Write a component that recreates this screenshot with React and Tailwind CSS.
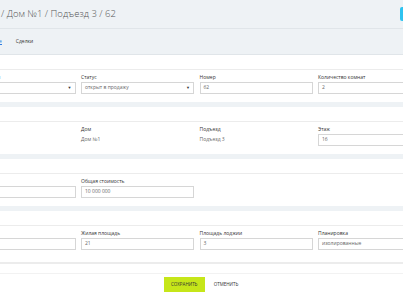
const FONT = "font-['Open_Sans','Liberation_Sans',sans-serif]";

function Label({ children }) {
  return (
    <div className="h-[7px] mb-[1px] text-[5px] leading-[7px] text-[#333] whitespace-nowrap">
      {children}
    </div>
  );
}

function Input({ value }) {
  return (
    <div className="h-[12px] border border-[#d6d6d6] bg-white flex items-center pl-[3px] text-[5px] text-[#666]">
      {value}
    </div>
  );
}

function Select({ value }) {
  return (
    <div className="h-[12px] border border-[#d6d6d6] bg-white flex items-center justify-between pl-[3px] pr-[3px] text-[5px] text-[#666]">
      <span>{value}</span>
      <span className="text-[4px] text-[#333]">▼</span>
    </div>
  );
}

function Text({ value }) {
  return (
    <div className="h-[12px] flex items-center text-[5px] text-[#666]">{value}</div>
  );
}

function Section({ fields, last }) {
  return (
    <div className="bg-white">
      <div className="h-[15px] border-b border-[#ececec]" />
      <div className={last ? "pt-[4px] pb-[12px]" : "pt-[4px] pb-[8px]"}>
        <div className="grid grid-cols-[113px_113px_113px_113px] gap-x-[5.5px] ml-[-37.5px]">
          {fields.map((f, i) => (
            <div key={i}>
              <Label>{f.label}</Label>
              {f.type === "select" && <Select value={f.value} />}
              {f.type === "input" && <Input value={f.value} />}
              {f.type === "text" && <Text value={f.value} />}
            </div>
          ))}
        </div>
      </div>
    </div>
  );
}

const sections = [
  [
    { label: "Типы квартиры", type: "select", value: "" },
    { label: "Статус", type: "select", value: "открыт в продажу" },
    { label: "Номер", type: "input", value: "62" },
    { label: "Количество комнат", type: "input", value: "2" },
  ],
  [
    { label: "", type: "text", value: "" },
    { label: "Дом", type: "text", value: "Дом №1" },
    { label: "Подъезд", type: "text", value: "Подъезд 3" },
    { label: "Этаж", type: "input", value: "16" },
  ],
  [
    { label: "", type: "input", value: "" },
    { label: "Общая стоимость", type: "input", value: "10 000 000" },
  ],
  [
    { label: "", type: "input", value: "" },
    { label: "Жилая площадь", type: "input", value: "21" },
    { label: "Площадь лоджии", type: "input", value: "3" },
    { label: "Планировка", type: "select", value: "изолированные" },
  ],
];

export default function App() {
  return (
    <div className={`w-[403px] h-[294px] overflow-hidden bg-white ${FONT}`}>
      <div className="bg-[#eef2f5]">
        <div className="h-[29px] flex items-center justify-between border-b border-[#e0e5e9]">
          <h1 className="text-[9.5px] font-light text-[#555] pl-[1px] whitespace-nowrap">
            / Дом №1 / Подъезд 3 / 62
          </h1>
          <div className="w-[3px] h-[14px] bg-[#2ec3f0] rounded-l-[2px] shrink-0" />
        </div>
        <div className="h-[26px] flex items-center gap-[14px] border-b border-[#e0e5e9] text-[5px]">
          <span className="text-[#2f7be0] border-b border-[#2f7be0] leading-[6px] ml-[-1px]">е</span>
          <span className="text-[#333]">Сделки</span>
        </div>
      </div>

      {sections.map((fields, i) => (
        <div key={i}>
          <Section fields={fields} last={i === sections.length - 1} />
          {i < sections.length - 1 && <div className="h-[5px] bg-[#eef2f5]" />}
        </div>
      ))}

      <div className="h-[2px] bg-[#ececec]" />
      <div className="h-[10px] border-b border-[#f2f2f2]" />
      <div className="flex justify-center items-center gap-[8px] pt-[3px]">
        <button className="w-[41px] h-[15px] bg-[#c6e619] text-[4.5px] text-[#333] uppercase">
          Сохранить
        </button>
        <button className="h-[15px] px-[1px] text-[4.5px] text-[#333] uppercase">
          Отменить
        </button>
      </div>
    </div>
  );
}
